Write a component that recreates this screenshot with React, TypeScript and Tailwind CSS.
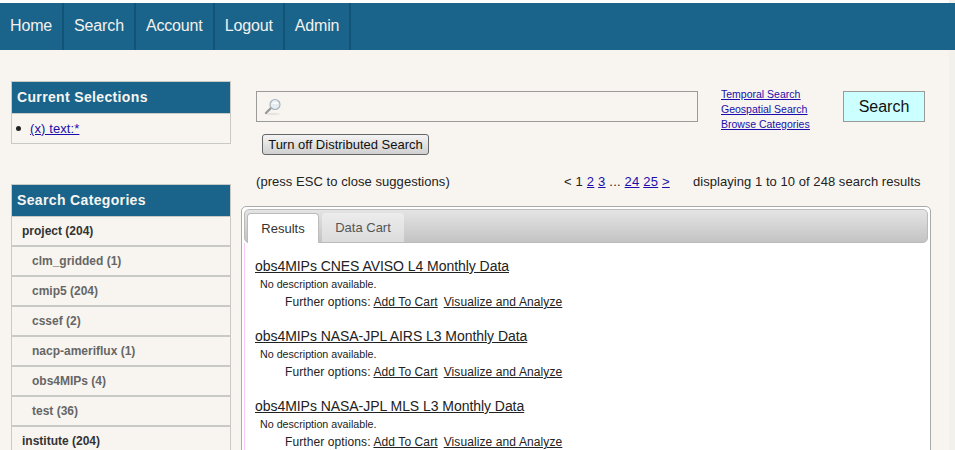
const navItems = ["Home", "Search", "Account", "Logout", "Admin"];

const categories = [
  { label: "project (204)", top: true },
  { label: "clm_gridded (1)" },
  { label: "cmip5 (204)" },
  { label: "cssef (2)" },
  { label: "nacp-ameriflux (1)" },
  { label: "obs4MIPs (4)" },
  { label: "test (36)" },
  { label: "institute (204)", top: true },
];

const results = [
  "obs4MIPs CNES AVISO L4 Monthly Data",
  "obs4MIPs NASA-JPL AIRS L3 Monthly Data",
  "obs4MIPs NASA-JPL MLS L3 Monthly Data",
];

function SearchGlass() {
  return (
    <svg width="18" height="18" viewBox="0 0 18 18" className="shrink-0">
      <ellipse cx="9" cy="16" rx="7" ry="1.2" fill="#e6e3de" />
      <line x1="2" y1="15" x2="7" y2="10" stroke="#9a9a9a" strokeWidth="2.4" strokeLinecap="round" />
      <circle cx="11" cy="6.5" r="5" fill="#e4edf2" stroke="#a9b2b8" strokeWidth="1.2" />
      <path d="M7.5 6 A3.8 3.8 0 0 1 14.5 6 Z" fill="#f8fbfc" />
    </svg>
  );
}

export default function App() {
  return (
    <div className="h-[450px] overflow-hidden bg-[#f2f1ec] font-['Liberation_Sans',Arial,sans-serif] text-[13px] text-[#222]">
      <div className="h-[450px] w-[949px] bg-[#f8f5f0] pt-[3px] [box-shadow:inset_0_3px_0_#fff]">
        <nav className="flex h-[47px] w-[955px] bg-[#1a648c]">
          {navItems.map((item) => (
            <a
              key={item}
              className="flex items-center border-r-2 border-[#125477] pb-px pl-[10px] pr-[10px] text-[16px] tracking-[-0.15px] text-[#f4f1ec]"
            >
              {item}
            </a>
          ))}
        </nav>

        <div className="flex">
          {/* Sidebar */}
          <aside className="ml-[11px] w-[220px] shrink-0 pt-[31px]">
            <section className="border border-[#c9c9c5]">
              <h2 className="flex h-[31px] items-center bg-[#1a648c] pl-[5px] text-[14px] font-bold tracking-[0.35px] text-[#f8f5f0]">
                Current Selections
              </h2>
              <ul className="flex h-[30px] items-center border-t border-[#c9c9c5] pl-[4px]">
                <li className="flex items-center text-[13px] tracking-[0.1px]">
                  <span className="mr-[9px] h-[5px] w-[5px] rounded-full bg-[#222]" />
                  <a className="text-[#1a0dab] underline">(x) text:*</a>
                </li>
              </ul>
            </section>

            <section className="mt-[40px] border-x border-t border-[#c9c9c5]">
              <h2 className="flex h-[31px] items-center bg-[#1a648c] pl-[5px] text-[14px] font-bold tracking-[0.35px] text-[#f8f5f0]">
                Search Categories
              </h2>
              {categories.map((c, i) => (
                <div
                  key={c.label}
                  className={[
                    "flex items-center border-[#c9c9c5] text-[12px] font-bold",
                    i === 0 ? "h-[29px] border-t" : "h-[30px] border-t-2",
                    c.top ? "pl-[10px] text-[#333]" : "pl-[20px] text-[#666]",
                  ].join(" ")}
                >
                  {c.label}
                </div>
              ))}
            </section>
          </aside>

          {/* Main column */}
          <main className="ml-[10px] w-[690px] shrink-0">
            <div className="ml-[15px] mt-[41px] flex items-start">
              <div className="flex h-[31px] w-[442px] items-center border border-[#9a9a98] pl-[7px]">
                <SearchGlass />
              </div>
              <div className="ml-[23px] mt-[-4px] flex w-[122px] flex-col text-[10.5px] leading-[15px] text-[#1a0dab] underline">
                <a>Temporal Search</a>
                <a>Geospatial Search</a>
                <a>Browse Categories</a>
              </div>
              <button className="flex h-[31px] w-[82px] items-center justify-center border border-[#9a9a98] bg-[#ccffff] text-[16px] text-[#111]">
                Search
              </button>
            </div>

            <button className="ml-[21px] mt-[2px] flex h-[21px] w-[167px] items-center justify-center rounded-[3px] border border-[#666] bg-gradient-to-b from-[#f4f4f4] to-[#d0d0d0] text-[13px] text-[#111]">
              Turn off Distributed Search
            </button>

            <div className="mt-[19px] flex h-[16px] items-center tracking-[0.05px]">
              <span className="ml-[15px] w-[308px]">(press ESC to close suggestions)</span>
              <span className="w-[129px] whitespace-nowrap tracking-[0.2px]">
                {"< 1 "}
                <a className="text-[#1a0dab] underline">2</a> <a className="text-[#1a0dab] underline">3</a>
                {" ... "}
                <a className="text-[#1a0dab] underline">24</a> <a className="text-[#1a0dab] underline">25</a>{" "}
                <a className="text-[#1a0dab] underline">&gt;</a>
              </span>
              <span>displaying 1 to 10 of 248 search results</span>
            </div>

            <section className="mt-[16px] h-[300px] rounded-t-[5px] border border-[#aaa] bg-white">
              <div className="mx-[2px] mt-[2px] flex h-[34px] items-end rounded-[5px] border border-[#bbb] bg-gradient-to-b from-[#e4e4e4] to-[#c4c4c4] pl-[2px]">
                <div className="mb-[-1px] flex h-[30px] w-[72px] items-center justify-center rounded-t-[4px] border border-b-0 border-[#bbb] bg-white text-[#333]">
                  Results
                </div>
                <div className="ml-[3px] flex h-[29px] w-[82px] items-center justify-center rounded-t-[4px] bg-gradient-to-b from-[#ececec] to-[#dcdcdc] text-[#555]">
                  Data Cart
                </div>
              </div>

              <div className="ml-[2px] h-[260px] border-l border-[#f6ccf6] pl-[10px] pt-[14px]">
                {results.map((title) => (
                  <article key={title} className="mb-[19px] h-[51px]">
                    <a className="block h-[18px] text-[14px] leading-[18px] tracking-[-0.05px] text-[#222] underline">{title}</a>
                    <p className="ml-[5px] mt-[2px] h-[14px] text-[10.7px] leading-[14px]">No description available.</p>
                    <p className="ml-[30px] mt-[4px] text-[12px] leading-[15px] tracking-[0.1px]">
                      Further options: <a className="underline">Add To Cart</a>
                      <a className="ml-[6px] underline">Visualize and Analyze</a>
                    </p>
                  </article>
                ))}
              </div>
            </section>
          </main>
        </div>
      </div>
    </div>
  );
}
